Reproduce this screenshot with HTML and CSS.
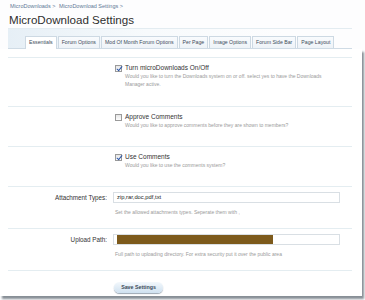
FILE: index.html
```html
<!DOCTYPE html>
<html lang="en">
<head>
    <meta charset="UTF-8">
    <title>MicroDownload Settings</title>
    <link rel="stylesheet" href="styles.css">
</head>
<body>
    <div class="crumbs">
        <a href="#">MicroDownloads &gt;</a>
        <a href="#">MicroDownload Settings &gt;</a>
    </div>
    <h1>MicroDownload Settings</h1>

    <div class="tabbar">
        <ul class="tabs">
            <li class="active">Essentials</li>
            <li>Forum Options</li>
            <li>Mod Of Month Forum Options</li>
            <li>Per Page</li>
            <li>Image Options</li>
            <li>Forum Side Bar</li>
            <li>Page Layout</li>
        </ul>
    </div>

    <div class="panel">
        <div class="row first">
            <div class="label"></div>
            <div class="ctrl">
                <label class="check"><span class="box on"></span>Turn microDownloads On/Off</label>
                <p class="hint indent">Would you like to turn the Downloads system on or off. select yes to have the Downloads Manager active.</p>
            </div>
        </div>

        <div class="row">
            <div class="label"></div>
            <div class="ctrl">
                <label class="check"><span class="box"></span>Approve Comments</label>
                <p class="hint indent">Would you like to approve comments before they are shown to members?</p>
            </div>
        </div>

        <div class="row">
            <div class="label"></div>
            <div class="ctrl">
                <label class="check"><span class="box on"></span>Use Comments</label>
                <p class="hint indent">Would you like to use the comments system?</p>
            </div>
        </div>

        <div class="row field">
            <div class="label">Attachment Types:</div>
            <div class="ctrl">
                <div class="text">zip,rar,doc,pdf,txt</div>
                <p class="hint">Set the allowed attachments types. Seperate them with ,</p>
            </div>
        </div>

        <div class="row field">
            <div class="label">Upload Path:</div>
            <div class="ctrl">
                <div class="text"><span class="hidden-path"></span></div>
                <p class="hint">Full path to uploading directory. For extra security put it over the public area</p>
            </div>
        </div>

        <div class="row buttons">
            <div class="label"></div>
            <div class="ctrl">
                <button type="button">Save Settings</button>
            </div>
        </div>
    </div>
</body>
</html>
```

FILE: styles.css
```css
*{
    margin: 0;
    padding: 0;
    box-sizing: border-box;
}
body {
    font-family: "Liberation Sans", Arial, sans-serif;
    background: #fdfdfe;
    color: #333;
    width: 365px;
    height: 300px;
    overflow: hidden;
}

.crumbs{
    padding: 3px 0 0 10px;
    font-size: 5.5px;
    line-height: 7px;
}
.crumbs a{
    color: #5d7896;
    text-decoration: none;
    margin-right: 2px;
}

h1{
    font-weight: normal;
    font-size: 11.6px;
    line-height: 14px;
    color: #2f2f2f;
    padding: 3px 0 0 9px;
    height: 18px;
}

.tabbar{
    margin: 0 13px 0 8px;
    border-top: 1px solid #e3ecf1;
    background: linear-gradient(to right, #e6eff6, #f7fafc 40%, #fdfdfe 80%);
    padding: 7px 0 0 17px;
    border-bottom: 1px solid #cfdbe5;
}
.tabs{
    list-style: none;
    display: flex;
    gap: 1px;
}
.tabs li{
    font-size: 5.2px;
    line-height: 11px;
    height: 12px;
    padding: 0 3px;
    color: #3e4c5a;
    background: linear-gradient(#f9fbfd, #eef3f8);
    border: 1px solid #cdd9e3;
    border-bottom: none;
    white-space: nowrap;
}
.tabs li.active{
    background: #fff;
    margin-bottom: -1px;
    height: 13px;
}

.panel{
    width: 362px;
    height: 247px;
    background: #fff;
    box-shadow: 2px 3px 2px rgba(95, 105, 115, 0.75);
    padding-top: 8px;
}

.row{
    display: grid;
    grid-template-columns: 99px 227px;
    column-gap: 6px;
    margin: 0 10px 0 8px;
    border-top: 1px solid #e4edf1;
    padding: 6px 0 17px;
}
.row.first{
    padding-bottom: 18px;
}
.label{
    text-align: right;
    font-size: 6.3px;
    line-height: 11px;
    color: #333;
}
.check{
    display: flex;
    align-items: center;
    font-size: 6.5px;
    line-height: 8px;
    color: #333;
    padding-left: 2px;
}
.box{
    width: 7px;
    height: 7px;
    border: 1px solid #9a9a9a;
    background: linear-gradient(#e6e6e6, #fdfdfd);
    margin-right: 3px;
    position: relative;
}
.box.on::after{
    content: "";
    position: absolute;
    left: 1.5px;
    top: -1px;
    width: 2px;
    height: 5px;
    border: solid #2c56a8;
    border-width: 0 1.3px 1.3px 0;
    transform: rotate(40deg);
}
.hint{
    font-size: 5px;
    line-height: 8px;
    color: #9a9a9a;
    padding: 0 0 0 2px;
}
.hint.indent{
    padding-left: 12px;
}

.field{
    padding: 5px 0 12px;
}
.text{
    height: 11px;
    border: 1px solid #d9dfe4;
    background: #fff;
    font-size: 5.8px;
    line-height: 9px;
    padding: 0 3px;
    color: #222;
    margin-bottom: 5px;
}
.field:last-of-type .text{
    padding: 0;
}
.hidden-path{
    display: block;
    width: 156px;
    height: 9px;
    background: #7d5a1c;
}

.buttons{
    padding: 4px 0 0;
}
button{
    margin-left: 1px;
    width: 49px;
    height: 11px;
    border: none;
    border-radius: 6px;
    background: linear-gradient(#f3f8fc, #cfe1f0);
    box-shadow: 0 1px 1px rgba(90, 110, 130, 0.6);
    font-family: "Liberation Sans", Arial, sans-serif;
    font-size: 5.3px;
    font-weight: bold;
    color: #3c4a58;
}
```
